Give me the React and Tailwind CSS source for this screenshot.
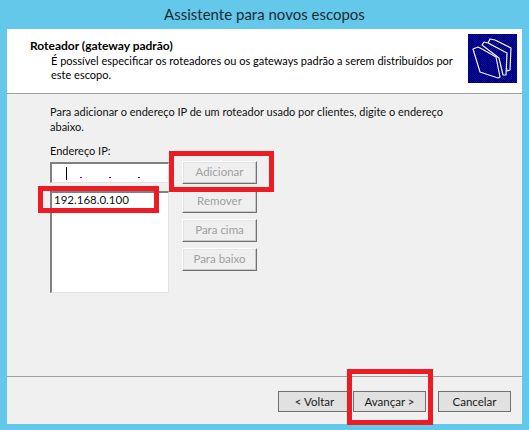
import React from "react";

function FolderIcon() {
  return (
    <svg width="49" height="49" viewBox="0 0 49 49" className="shrink-0">
      <defs>
        <pattern id="dither" width="2" height="2" patternUnits="userSpaceOnUse">
          <rect width="2" height="2" fill="#0000f0" />
          <rect width="1" height="1" fill="#000020" />
          <rect x="1" y="1" width="1" height="1" fill="#000020" />
        </pattern>
      </defs>
      <rect width="49" height="49" fill="url(#dither)" />
      <g fill="url(#dither)" stroke="#f4f4f4" strokeWidth="1.2" strokeLinejoin="round">
        <path d="M20 9 L22 5 L27 6 L43 14 L42 36 L39 37 L36 18 Z" />
        <path d="M14 11 L16 8 L20 9 L39 19 L38 41 L35 41 L31 24 Z" />
        <path d="M5 15 L10 13 L14 15 L28 23 L32 43 L30 44 L12 38 Z" />
      </g>
    </svg>
  );
}

function SideButton({ children }) {
  return (
    <button className="w-[75px] h-[23px] pb-[2px] bg-[#efefef] text-[11.5px] leading-none text-[#a0a0a0] border border-t-white border-l-white border-r-[#707070] border-b-[#707070] shadow-[inset_-1px_-1px_0_#c8c8c8,inset_1px_1px_0_#e4e4e4]">
      {children}
    </button>
  );
}

function FooterButton({ children }) {
  return (
    <button className="w-[73px] h-[21px] bg-[#e1e1e1] text-[11.5px] leading-none text-[#1a1a1a] border border-[#707070]">
      {children}
    </button>
  );
}

export default function App() {
  return (
    <div className="relative w-[529px] h-[430px] overflow-hidden bg-[#63c8ea] text-black font-['Lato',sans-serif]">
      {/* Title bar */}
      <div className="h-[29px] flex items-center justify-center text-[15px] text-[#1c2b33]">
        Assistente para novos escopos
      </div>

      <div className="mx-[7px] h-[395px] flex flex-col bg-[#f0f0f0]">
        {/* Header */}
        <div className="h-[65px] shrink-0 flex justify-between bg-white pl-[23px] pr-[5px] pt-[5px] border-b border-[#a0a0a0]">
          <div className="text-[11px] leading-[14px]">
            <div className="font-bold text-[12px] mt-[5px]">Roteador (gateway padrão)</div>
            <p className="pl-[21px] w-[430px] mt-[1px]">
              É possível especificar os roteadores ou os gateways padrão a serem distribuídos por este escopo.
            </p>
          </div>
          <FolderIcon />
        </div>

        {/* Body */}
        <div className="h-[283px] shrink-0 border-b border-[#a0a0a0] pl-[43px] pt-[10px] text-[11px] leading-[15px] text-[#111]">
          <p className="w-[400px]">
            Para adicionar o endereço IP de um roteador usado por clientes, digite o endereço abaixo.
          </p>
          <div className="flex mt-[9px] gap-[13px]">
            <div className="w-[119px]">
              <div className="h-[19px]">Endereço IP:</div>
              <div className="h-[21px] bg-white border-t-2 border-l-2 border-r border-b border-t-[#808080] border-l-[#808080] border-r-[#e3e3e3] border-b-[#e3e3e3] flex items-center pl-[14px] gap-[27px]">
                <span className="w-px h-[13px] bg-black -mr-[14px]" />
                <span className="w-[2px] h-px bg-[#a000a0] mt-[8px]" />
                <span className="w-[2px] h-px bg-[#a000a0] mt-[8px]" />
                <span className="w-[2px] h-px bg-[#a000a0] mt-[8px]" />
              </div>
              <div className="h-[102px] mt-[8px] bg-white border-t-2 border-l-2 border-r border-b border-t-[#808080] border-l-[#808080] border-r-[#e3e3e3] border-b-[#e3e3e3] pl-[2px] text-[11.5px] leading-[13px]">
                192.168.0.100
              </div>
            </div>
            <div className="flex flex-col gap-[6px] pt-[18px]">
              <SideButton>Adicionar</SideButton>
              <SideButton>Remover</SideButton>
              <SideButton>Para cima</SideButton>
              <SideButton>Para baixo</SideButton>
            </div>
          </div>
        </div>

        {/* Footer */}
        <div className="flex-1 flex justify-end items-start pt-[14px] pr-[11px]">
          <div className="flex gap-[2px]">
            <FooterButton>&lt; Voltar</FooterButton>
            <FooterButton>Avançar &gt;</FooterButton>
          </div>
          <div className="flex ml-[12px]">
            <FooterButton>Cancelar</FooterButton>
          </div>
        </div>
      </div>

      {/* Red annotations over the screenshot */}
      <div className="absolute left-[169px] top-[151px] w-[105px] h-[41px] border-[5px] border-[#ed1c24]" />
      <div className="absolute left-[38px] top-[186px] w-[121px] h-[27px] border-[5px] border-[#ed1c24]" />
      <div className="absolute left-[347px] top-[369px] w-[86px] h-[56px] border-[5px] border-[#ed1c24]" />
    </div>
  );
}
